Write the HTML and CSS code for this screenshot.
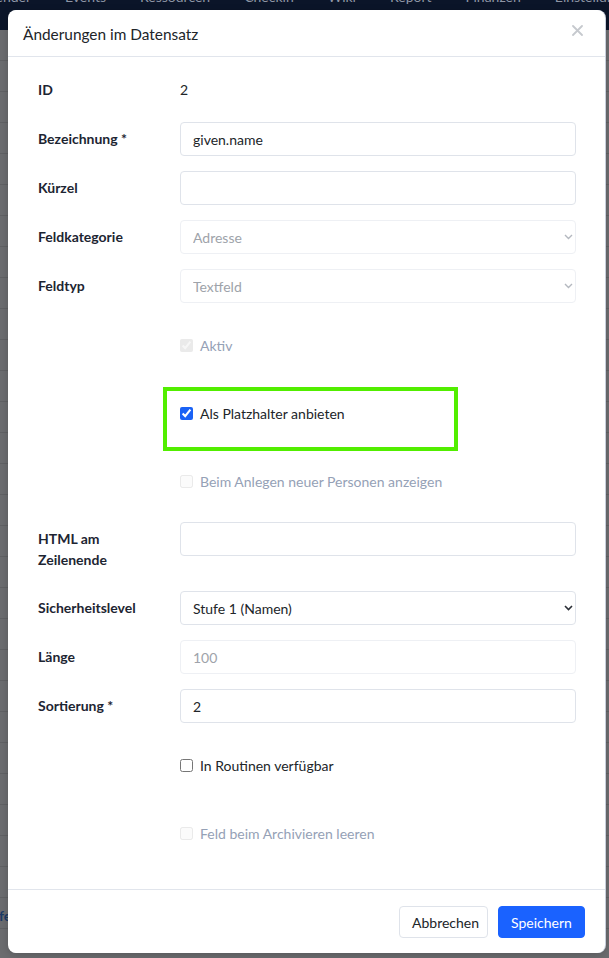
FILE: index.html
```html
<!DOCTYPE html>
<html lang="de">
<head>
  <meta charset="UTF-8">
  <meta name="viewport" content="width=device-width, initial-scale=1.0">
  <title>Änderungen im Datensatz</title>
  <link rel="stylesheet" href="styles.css">
</head>
<body>
  <div class="page">
    <nav class="topnav">
      <span class="nav-first">Kalender</span>
      <span>Events</span>
      <span>Ressourcen</span>
      <span>Checkin</span>
      <span>Wiki</span>
      <span>Report</span>
      <span>Finanzen</span>
      <span>Einstellungen</span>
    </nav>
    <div class="list">
      <div class="list-spacer"></div>
      <div class="list-row"><span class="list-link">feld</span></div>
    </div>
  </div>

  <div class="modal">
    <div class="modal-header">
      <h5 class="modal-title">Änderungen im Datensatz</h5>
      <button class="btn-close" type="button" aria-label="Schließen">
        <svg width="11" height="11" viewBox="0 0 11 11"><path d="M1 1L10 10M10 1L1 10" stroke="currentColor" stroke-width="1.8" stroke-linecap="round"/></svg>
      </button>
    </div>

    <div class="modal-body">
      <div class="form-row">
        <label class="form-label">ID</label>
        <div class="static-value">2</div>
      </div>
      <div class="form-row">
        <label class="form-label">Bezeichnung *</label>
        <input class="form-control" type="text" value="given.name">
      </div>
      <div class="form-row">
        <label class="form-label">Kürzel</label>
        <input class="form-control" type="text" value="">
      </div>
      <div class="form-row">
        <label class="form-label">Feldkategorie</label>
        <div class="select-wrap">
          <select class="form-control form-select" disabled><option>Adresse</option></select>
          <svg class="chevron" width="9" height="6" viewBox="0 0 9 6"><path d="M1 1L4.5 4.5L8 1" fill="none" stroke="currentColor" stroke-width="1.4"/></svg>
        </div>
      </div>
      <div class="form-row">
        <label class="form-label">Feldtyp</label>
        <div class="select-wrap">
          <select class="form-control form-select" disabled><option>Textfeld</option></select>
          <svg class="chevron" width="9" height="6" viewBox="0 0 9 6"><path d="M1 1L4.5 4.5L8 1" fill="none" stroke="currentColor" stroke-width="1.4"/></svg>
        </div>
      </div>

      <div class="form-row check-row">
        <label class="form-check disabled"><input type="checkbox" checked disabled> Aktiv</label>
      </div>
      <div class="form-row check-row">
        <label class="form-check highlighted"><input type="checkbox" checked> Als Platzhalter anbieten</label>
      </div>
      <div class="form-row check-row">
        <label class="form-check disabled"><input type="checkbox" disabled> Beim Anlegen neuer Personen anzeigen</label>
      </div>

      <div class="form-row">
        <label class="form-label">HTML am Zeilenende</label>
        <input class="form-control" type="text" value="">
      </div>
      <div class="form-row">
        <label class="form-label">Sicherheitslevel</label>
        <div class="select-wrap">
          <select class="form-control form-select"><option>Stufe 1 (Namen)</option></select>
          <svg class="chevron dark" width="9" height="6" viewBox="0 0 9 6"><path d="M1 1L4.5 4.5L8 1" fill="none" stroke="currentColor" stroke-width="1.6"/></svg>
        </div>
      </div>
      <div class="form-row">
        <label class="form-label">Länge</label>
        <input class="form-control" type="text" value="100" disabled>
      </div>
      <div class="form-row">
        <label class="form-label">Sortierung *</label>
        <input class="form-control" type="text" value="2">
      </div>

      <div class="form-row check-row">
        <label class="form-check"><input type="checkbox"> In Routinen verfügbar</label>
      </div>
      <div class="form-row check-row">
        <label class="form-check disabled"><input type="checkbox" disabled> Feld beim Archivieren leeren</label>
      </div>
    </div>

    <div class="modal-footer">
      <button class="btn btn-light" type="button">Abbrechen</button>
      <button class="btn btn-primary" type="button">Speichern</button>
    </div>
  </div>
</body>
</html>
```

FILE: styles.css
```css
body {
  margin: 0;
  min-height: 100vh;
  background: #6b6c6f;
  font-family: Lato, 'Noto Sans', Arial, sans-serif;
  overflow: hidden;
}

/* abgedunkelte Seite */
.page {
  height: 958px;
  overflow: hidden;
}
.topnav {
  height: 30px;
  background: #0b1529;
  display: flex;
  gap: 34px;
  overflow: hidden;
  white-space: nowrap;
}
.topnav span {
  margin-top: -13px;
  line-height: 20px;
  font-size: 14px;
  color: #8e95a5;
}
.topnav .nav-first {
  margin-left: -24px;
}
.list {
  height: 928px;
  background: repeating-linear-gradient(to bottom, transparent 0, transparent 30px, #606164 30px, #606164 31px);
}
.list-spacer {
  height: 868px;
}
.list-row {
  height: 31px;
  padding-top: 7px;
  box-sizing: border-box;
  line-height: 20px;
}
.list-link {
  margin-left: -1px;
  font-size: 14px;
  font-weight: 700;
  color: #1b3a66;
}

/* Dialog */
.modal {
  position: absolute;
  top: 10px;
  left: 8px;
  width: 597px;
  background: #fff;
  border-radius: 8px;
  box-shadow: 1px 0 0 #c9cfdb, 0 2px 8px rgba(0,0,0,0.18);
  display: flex;
  flex-direction: column;
}
.modal-header {
  height: 46px;
  border-bottom: 1px solid #e1e5ec;
  display: flex;
  align-items: center;
  justify-content: space-between;
  padding: 0 22px 0 15px;
}
.modal-title {
  margin: 0;
  font-size: 15.4px;
  font-weight: 400;
  color: #212529;
  padding-top: 1px;
}
.btn-close {
  border: none;
  background: none;
  padding: 0;
  color: #c6c9ce;
  display: flex;
  margin-top: -5px;
}

.modal-body {
  padding: 16px 29px 30px 30px;
  display: flex;
  flex-direction: column;
  gap: 15px;
}
.form-row {
  display: grid;
  grid-template-columns: 142px 1fr;
  align-items: start;
}
.form-label {
  padding: 6px 0;
  line-height: 21px;
  font-size: 14px;
  font-weight: 700;
  color: #1d2532;
  padding-right: 40px;
}
.static-value {
  line-height: 34px;
  font-size: 14px;
  color: #212529;
}
.form-control {
  box-sizing: border-box;
  width: 100%;
  height: 34px;
  margin: 0;
  border: 1px solid #dfe3ea;
  border-radius: 4px;
  padding: 0 12px;
  font-family: inherit;
  font-size: 14px;
  color: #212529;
  background: #fff;
  outline: none;
}
.form-control:disabled {
  border-color: #eef0f4;
  color: #9ea3aa;
  background: #fff;
  opacity: 1;
}
.select-wrap {
  position: relative;
}
.form-select {
  appearance: none;
  -webkit-appearance: none;
}
.chevron {
  position: absolute;
  right: 3px;
  top: 14px;
  color: #b4b8bf;
  pointer-events: none;
}
.chevron.dark {
  color: #2b2f36;
}

/* Checkbox-Zeilen */
.check-row .form-check {
  grid-column: 2;
}
.form-check {
  position: relative;
  display: flex;
  align-items: center;
  gap: 7px;
  padding: 17px 0 15px;
  line-height: 21px;
  font-size: 14px;
  color: #212529;
}
.form-check input {
  margin: 0;
  width: 13px;
  height: 13px;
  accent-color: #1a62f5;
}
.form-check.disabled {
  color: #95a1b6;
}
.form-check.disabled input {
  opacity: 0.45;
}
/* grüne Markierung um das Platzhalter-Feld */
.form-check.highlighted::after {
  content: '';
  position: absolute;
  left: -17px;
  top: 1px;
  width: 295px;
  height: 64px;
  border: 4px solid #52ee00;
  box-sizing: border-box;
  pointer-events: none;
}

.modal-footer {
  border-top: 1px solid #e1e5ec;
  padding: 16px 20px 15px;
  display: flex;
  justify-content: flex-end;
  gap: 10px;
}
.btn {
  height: 32px;
  border-radius: 4px;
  font-family: inherit;
  font-size: 14px;
  padding: 0 12px;
  cursor: pointer;
}
.btn-light {
  width: 89px;
  background: #fff;
  border: 1px solid #dfe3ea;
  color: #212529;
}
.btn-primary {
  width: 87px;
  background: #1a62ff;
  border: 1px solid #1a62ff;
  color: #fff;
}
```
